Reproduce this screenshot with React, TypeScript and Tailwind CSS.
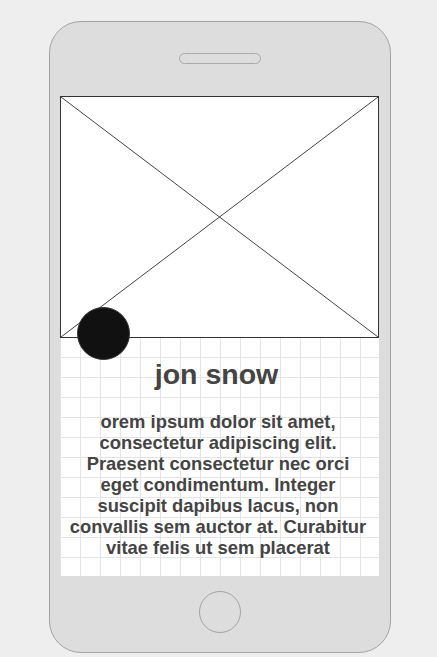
export default function App() {
    return (
        <div className="min-h-screen w-full bg-[#eeeeee] pt-[21px] pl-[49px] font-['Liberation_Sans',Arial,sans-serif]">
            {/* Phone body */}
            <div className="w-[342px] h-[632px] bg-[#dddddd] border border-[#a3a3a3] rounded-[32px] px-[10px] flex flex-col items-center">
                {/* Speaker */}
                <div className="mt-[31px] w-[82px] h-[11px] rounded-full border border-[#aaaaaa]" />

                {/* Screen */}
                <div className="self-start mt-[32px] w-[319px] h-[480px] bg-white bg-[linear-gradient(to_right,#e4e4e4_1px,transparent_1px),linear-gradient(to_bottom,#e4e4e4_1px,transparent_1px)] bg-[size:20px_20px] bg-[position:0_1px] flex flex-col">
                    {/* Image placeholder */}
                    <div className="relative h-[242px] w-full bg-white border border-[#333333]">
                        <svg className="absolute inset-0 w-full h-full" viewBox="0 0 317 240" preserveAspectRatio="none">
                            <line x1="0" y1="0" x2="317" y2="240" stroke="#444" strokeWidth="1" vectorEffect="non-scaling-stroke" />
                            <line x1="317" y1="0" x2="0" y2="240" stroke="#444" strokeWidth="1" vectorEffect="non-scaling-stroke" />
                        </svg>
                        {/* Avatar */}
                        <div className="absolute left-[16px] top-[210px] w-[53px] h-[53px] rounded-full bg-[#111111] border border-[#333333]" />
                    </div>

                    <h1 className="mt-[20px] pr-[6px] text-center text-[28.5px] leading-[32px] font-bold text-[#444444]">jon snow</h1>

                    <p className="mt-[21px] pl-[8px] pr-[11px] text-center text-[18.4px] leading-[21px] font-bold text-[#444444]">
                        orem ipsum dolor sit amet, consectetur adipiscing elit. Praesent consectetur nec orci eget condimentum. Integer suscipit dapibus lacus, non convallis sem auctor at. Curabitur vitae felis ut sem placerat
                    </p>
                </div>

                {/* Home button */}
                <div className="mt-[15px] w-[42px] h-[42px] rounded-full border border-[#a3a3a3]" />
            </div>
        </div>
    )
}
